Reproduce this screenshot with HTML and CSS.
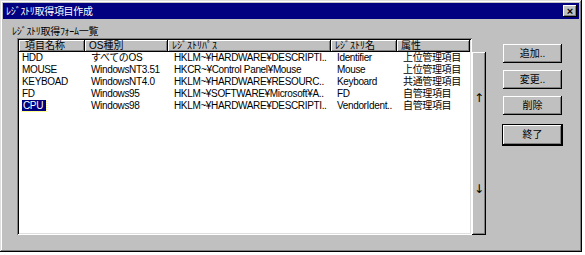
FILE: index.html
```html
<!DOCTYPE html>
<html lang="ja">
<head>
<meta charset="UTF-8">
<title>ﾚｼﾞｽﾄﾘ取得項目作成</title>
<link rel="stylesheet" href="styles.css">
</head>
<body>
<div class="window">
  <div class="titlebar">
    <span class="title">ﾚｼﾞｽﾄﾘ取得項目作成</span>
    <span class="close">×</span>
  </div>

  <div class="content">
    <div class="left">
      <div class="caption">ﾚｼﾞｽﾄﾘ取得ﾌｫｰﾑ一覧</div>
      <div class="listwrap">
        <div class="listbox">
          <div class="row head">
            <div>項目名称</div>
            <div>OS種別</div>
            <div>ﾚｼﾞｽﾄﾘﾊﾟｽ</div>
            <div>ﾚｼﾞｽﾄﾘ名</div>
            <div>属性</div>
          </div>
          <div class="row">
            <div>HDD</div>
            <div>すべてのOS</div>
            <div>HKLM~¥HARDWARE¥DESCRIPTI..</div>
            <div>Identifier</div>
            <div>上位管理項目</div>
          </div>
          <div class="row">
            <div>MOUSE</div>
            <div>WindowsNT3.51</div>
            <div>HKCR~¥Control Panel¥Mouse</div>
            <div>Mouse</div>
            <div>上位管理項目</div>
          </div>
          <div class="row">
            <div>KEYBOAD</div>
            <div>WindowsNT4.0</div>
            <div>HKLM~¥HARDWARE¥RESOURC..</div>
            <div>Keyboard</div>
            <div>共通管理項目</div>
          </div>
          <div class="row">
            <div>FD</div>
            <div>Windows95</div>
            <div>HKLM~¥SOFTWARE¥Microsoft¥A..</div>
            <div>FD</div>
            <div>自管理項目</div>
          </div>
          <div class="row">
            <div><span class="selected">CPU</span></div>
            <div>Windows98</div>
            <div>HKLM~¥HARDWARE¥DESCRIPTI..</div>
            <div>VendorIdent..</div>
            <div>自管理項目</div>
          </div>
        </div>
        <div class="scroll">
          <span>↑</span>
          <span>↓</span>
        </div>
      </div>
    </div>

    <div class="buttons">
      <div class="btn">追加..</div>
      <div class="btn">変更..</div>
      <div class="btn">削除</div>
      <div class="btn default">終了</div>
    </div>
  </div>
</div>
</body>
</html>
```

FILE: styles.css
```css
body {
  margin: 0;
  background: #fff;
  font-family: "Liberation Sans", "Noto Sans CJK JP", sans-serif;
  font-size: 10px;
  color: #000;
}
.window {
  width: 582px;
  height: 252px;
  box-sizing: border-box;
  padding: 3px;
  background: #c0c0c0;
  box-shadow: inset -1px -1px #000, inset 1px 1px #dfdfdf,
              inset -2px -2px #808080, inset 2px 2px #fff;
}

/* title bar */
.titlebar {
  height: 16px;
  background: #000080;
  color: #fff;
  display: flex;
  align-items: center;
  justify-content: space-between;
  padding: 0 2px 0 3px;
}
.title {
  font-family: "Noto Sans CJK JP", sans-serif;
  line-height: 16px;
  letter-spacing: -0.3px;
}
.close {
  width: 14px;
  height: 12px;
  background: #c0c0c0;
  color: #000;
  font-weight: bold;
  font-size: 11px;
  line-height: 12px;
  text-align: center;
  box-shadow: inset -1px -1px #000, inset 1px 1px #fff, inset -2px -2px #808080;
}

.content {
  display: flex;
  padding-top: 6px;
}
.left {
  padding-left: 9px;
}
.caption {
  line-height: 13px;
  height: 13px;
  letter-spacing: -0.3px;
}

/* list */
.listwrap {
  display: flex;
  margin-left: 5px;
}
.listbox {
  width: 451px;
  height: 193px;
  padding: 2px;
  background: #fff;
  box-shadow: inset 1px 1px #808080, inset -1px -1px #fff,
              inset 2px 2px #000, inset -2px -2px #dfdfdf;
}
.row {
  display: grid;
  grid-template-columns: 66px 83px 163px 66px 73px;
  height: 12px;
  line-height: 12px;
  white-space: nowrap;
  letter-spacing: -0.35px;
}
.row > div {
  overflow: hidden;
  padding-left: 6px;
}
.row > div:first-child {
  padding-left: 3px;
}
.row.head > div {
  background: #c0c0c0;
  padding-left: 4px;
  letter-spacing: 0;
  box-shadow: inset -1px -1px #000, inset 1px 1px #fff, inset -2px -2px #808080;
}
.row.head > div:first-child {
  padding-left: 6px;
}
.selected {
  background: #000080;
  color: #fff;
  outline: 1px dotted #ffff80;
  padding: 0 3px 0 1px;
}

.scroll {
  width: 14px;
  margin-top: 14px;
  background: #c0c0c0;
  display: flex;
  flex-direction: column;
  justify-content: space-around;
  align-items: center;
  box-shadow: inset -1px -1px #000, inset 1px 1px #fff, inset -2px -2px #808080;
}
.scroll span {
  font-family: "DejaVu Sans", sans-serif;
  font-size: 12px;
  line-height: 12px;
}

/* buttons */
.buttons {
  margin-left: 17px;
  padding-top: 19px;
  display: flex;
  flex-direction: column;
}
.btn {
  width: 59px;
  height: 19px;
  line-height: 19px;
  text-align: center;
  margin-bottom: 7px;
  box-shadow: inset -1px -1px #000, inset 1px 1px #fff, inset -2px -2px #808080;
}
.btn.default {
  margin-top: 3px;
  outline: 1px solid #000;
  height: 20px;
  line-height: 20px;
}
```
